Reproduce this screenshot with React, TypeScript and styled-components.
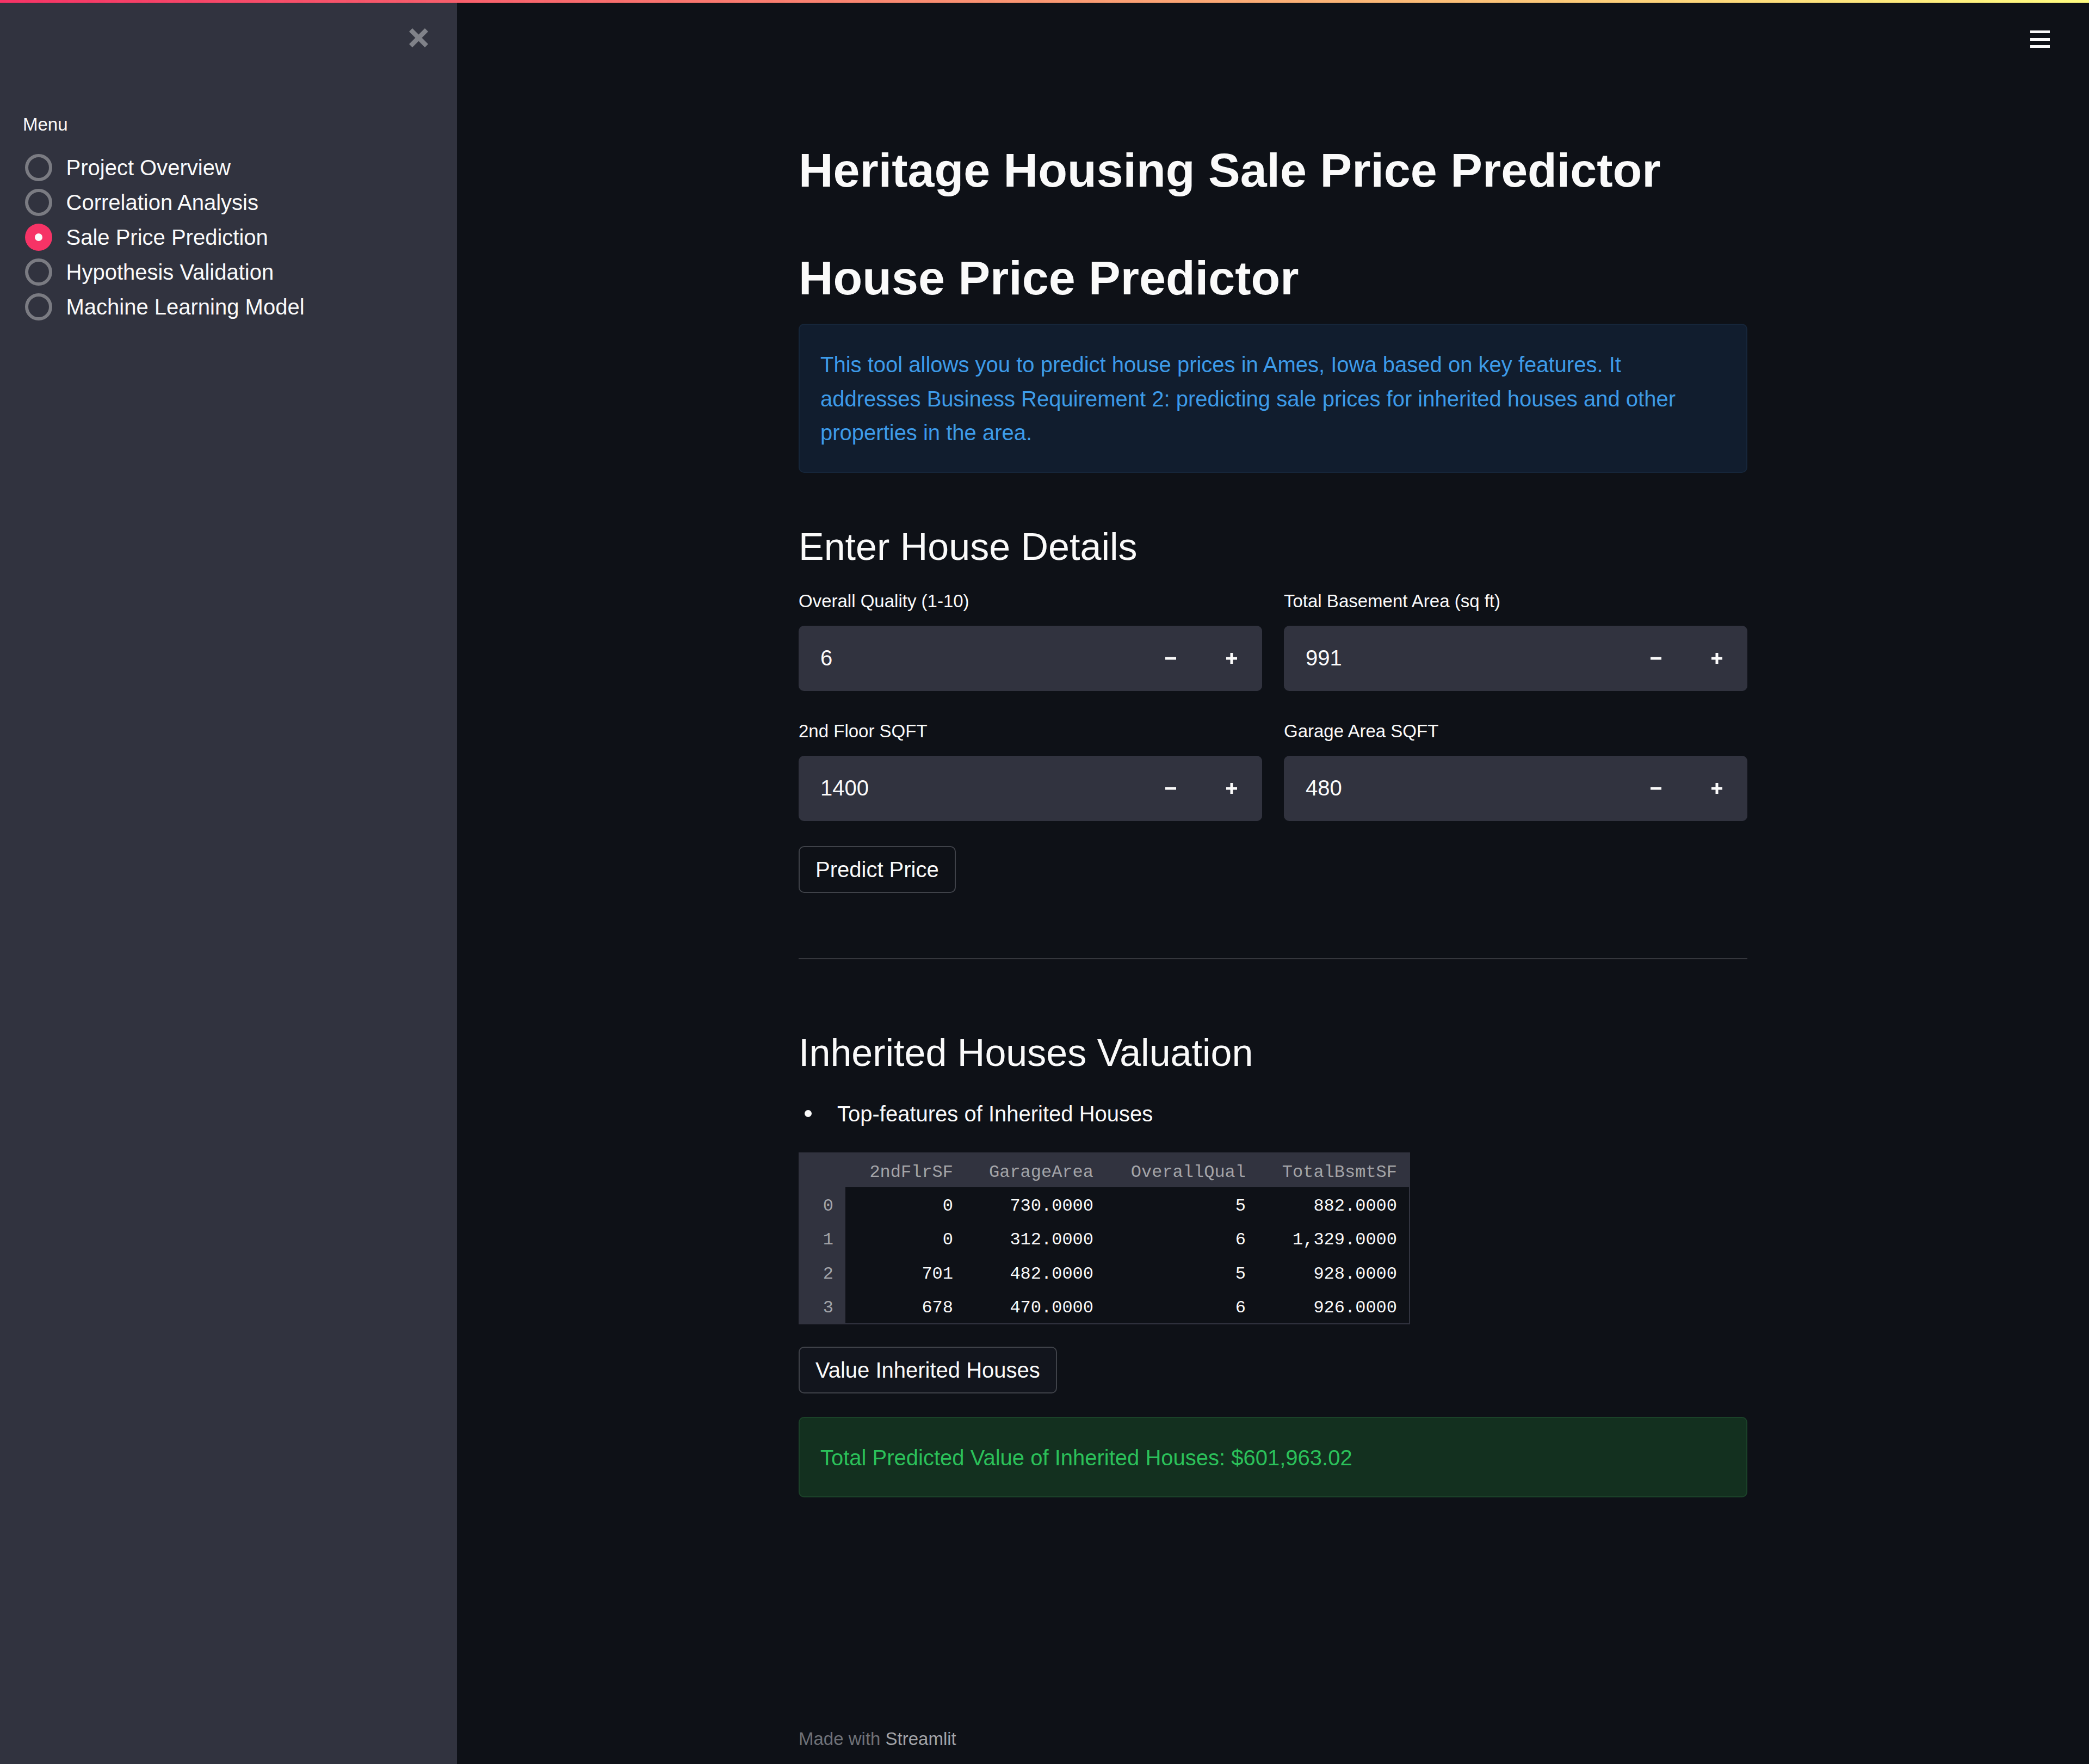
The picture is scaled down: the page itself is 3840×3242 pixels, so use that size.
import styled, { createGlobalStyle } from 'styled-components'

// ==================== colours ====================

const BG = '#0e1117'
const SECONDARY = '#31333f'
const TEXT = '#fafafa'
const PRIMARY = '#f63366'

const GlobalStyle = createGlobalStyle`
  html, body {
    margin: 0;
    padding: 0;
    background: ${BG};
  }
  body {
    font-family: "Liberation Sans", Arial, sans-serif;
    color: ${TEXT};
  }
  * { box-sizing: border-box; }
`

// ==================== frame ====================

const Page = styled.div`
  display: flex;
  min-height: 100vh;
  background: ${BG};
`

const Decoration = styled.div`
  position: fixed;
  top: 0;
  left: 0;
  right: 0;
  height: 5px;
  background: linear-gradient(90deg, ${PRIMARY}, #fffd80);
  z-index: 10;
`

// ==================== sidebar ====================

const Sidebar = styled.aside`
  width: 840px;
  flex-shrink: 0;
  background: ${SECONDARY};
  padding: 52px 53px 0 42px;
  display: flex;
  flex-direction: column;
`

const CloseRow = styled.div`
  display: flex;
  justify-content: flex-end;
`

const CloseButton = styled.button`
  width: 35px;
  height: 35px;
  padding: 0;
  border: 0;
  background: none;
  color: #808289;
  display: flex;
  cursor: pointer;
`

const MenuLabel = styled.div`
  margin-top: 114px;
  font-size: 33px;
  line-height: 56px;
`

const RadioGroup = styled.div`
  margin-top: 19px;
  display: flex;
  flex-direction: column;
`

const RadioRow = styled.label`
  height: 64px;
  display: flex;
  align-items: center;
  gap: 26px;
  padding-left: 3.5px;
  font-size: 40px;
  cursor: pointer;
`

const RadioMark = styled.span<{ $checked: boolean }>`
  width: 50px;
  height: 50px;
  flex-shrink: 0;
  border-radius: 50%;
  border: ${p => (p.$checked ? 'none' : '6px solid #7a7b82')};
  background: ${p => (p.$checked ? PRIMARY : 'transparent')};
  display: flex;
  align-items: center;
  justify-content: center;

  &::after {
    content: '';
    display: ${p => (p.$checked ? 'block' : 'none')};
    width: 14px;
    height: 14px;
    border-radius: 50%;
    background: ${TEXT};
  }
`

// ==================== main ====================

const Main = styled.main`
  flex: 1;
  position: relative;
  display: flex;
  flex-direction: column;
  align-items: center;
`

const MenuButton = styled.button`
  position: absolute;
  top: 56px;
  right: 72px;
  width: 36px;
  padding: 0;
  border: 0;
  background: none;
  display: flex;
  flex-direction: column;
  gap: 8.5px;
  cursor: pointer;
`

const MenuBar = styled.span`
  display: block;
  height: 5px;
  background: ${TEXT};
`

const Block = styled.div`
  width: 1744px;
  flex: 1;
  display: flex;
  flex-direction: column;
  padding-top: 260px;
`

const Title = styled.h1<{ $gap?: number }>`
  margin: ${p => p.$gap ?? 0}px 0 0;
  font-size: 88px;
  font-weight: 700;
  line-height: 1.2;
`

const Subheader = styled.h3<{ $gap: number }>`
  margin: ${p => p.$gap}px 0 0;
  font-size: 70px;
  font-weight: 400;
  line-height: 84px;
`

const Alert = styled.div<{ $kind: 'info' | 'success'; $gap: number }>`
  margin-top: ${p => p.$gap}px;
  border-radius: 10px;
  border: 2px solid ${p => (p.$kind === 'info' ? '#16263a' : '#1b4229')};
  background: ${p => (p.$kind === 'info' ? '#111d2e' : '#13301f')};
  color: ${p => (p.$kind === 'info' ? '#3d9be9' : '#2bc15a')};
  padding: 42px 38px 40px;
  font-size: 40px;
  line-height: 62.5px;
`

const FieldGrid = styled.div`
  margin-top: 30px;
  display: grid;
  grid-template-columns: 1fr 1fr;
  column-gap: 40px;
  row-gap: 46px;
`

const Field = styled.div`
  display: flex;
  flex-direction: column;
`

const FieldLabel = styled.label`
  font-size: 33px;
  line-height: 56px;
`

const NumberShell = styled.div`
  margin-top: 17px;
  height: 120px;
  display: flex;
  border-radius: 10px;
  overflow: hidden;
  background: ${SECONDARY};
`

const NumberValue = styled.input`
  flex: 1;
  min-width: 0;
  height: 100%;
  padding: 0 0 0 40px;
  border: 0;
  outline: none;
  background: transparent;
  color: ${TEXT};
  font-family: inherit;
  font-size: 40px;
`

const StepButton = styled.button`
  width: 112px;
  height: 100%;
  padding: 0;
  border: 0;
  background: ${SECONDARY};
  color: ${TEXT};
  display: flex;
  align-items: center;
  justify-content: center;
  cursor: pointer;
`

const Button = styled.button<{ $gap: number; $raised?: boolean }>`
  margin-top: ${p => p.$gap}px;
  align-self: flex-start;
  padding: 9px 29px;
  border: 2px solid #3f4249;
  border-radius: 10px;
  background: ${p => (p.$raised ? '#12151d' : 'transparent')};
  color: ${TEXT};
  font-family: inherit;
  font-size: 40px;
  line-height: 64px;
  cursor: pointer;
`

const Divider = styled.div`
  margin-top: 120px;
  height: 2px;
  background: #35373d;
`

const BulletList = styled.ul`
  margin: 39px 0 0;
  padding: 0;
  list-style: none;
`

const BulletItem = styled.li`
  display: flex;
  align-items: center;
  font-size: 40px;
  line-height: 62.5px;

  &::before {
    content: '';
    width: 13px;
    height: 13px;
    border-radius: 50%;
    background: ${TEXT};
    margin: 0 47px 0 11px;
  }
`

const DataTable = styled.table`
  margin-top: 39.5px;
  align-self: flex-start;
  width: 1124px;
  table-layout: fixed;
  border-collapse: separate;
  border-spacing: 0;
  border: 2px solid ${SECONDARY};
  font-family: "Liberation Mono", "DejaVu Sans Mono", monospace;
  font-size: 32px;
`

const Col = styled.col<{ $width: number }>`
  width: ${p => p.$width}px;
`

const HeadCell = styled.th`
  height: 62px;
  padding: 7px 22px 0 0;
  text-align: right;
  font-weight: 400;
  color: #a3a4a8;
  background: ${SECONDARY};
  white-space: nowrap;
`

const IndexCell = styled.th`
  height: 62.5px;
  padding: 7px 22px 0 0;
  text-align: right;
  font-weight: 400;
  color: #a3a4a8;
  background: ${SECONDARY};
`

const Cell = styled.td`
  height: 62.5px;
  padding: 7px 22px 0 0;
  text-align: right;
  color: ${TEXT};
  white-space: nowrap;
`

const Footer = styled.footer`
  margin-top: auto;
  padding-bottom: 18px;
  font-size: 33px;
  line-height: 56px;
  color: #6f7177;

  strong {
    font-weight: 400;
    color: #a2a4a8;
  }
`

// ==================== data ====================

const pages = [
  'Project Overview',
  'Correlation Analysis',
  'Sale Price Prediction',
  'Hypothesis Validation',
  'Machine Learning Model',
]

const fields = [
  { label: 'Overall Quality (1-10)', value: '6' },
  { label: 'Total Basement Area (sq ft)', value: '991' },
  { label: '2nd Floor SQFT', value: '1400' },
  { label: 'Garage Area SQFT', value: '480' },
]

const columns = ['2ndFlrSF', 'GarageArea', 'OverallQual', 'TotalBsmtSF']

const rows = [
  ['0', '730.0000', '5', '882.0000'],
  ['0', '312.0000', '6', '1,329.0000'],
  ['701', '482.0000', '5', '928.0000'],
  ['678', '470.0000', '6', '926.0000'],
]

// ==================== icons ====================

const CloseIcon = () => (
  <svg width="35" height="35" viewBox="0 0 35 35">
    <path d="M3 3 L32 32 M32 3 L3 32" stroke="currentColor" strokeWidth="8.5" strokeLinecap="butt" />
  </svg>
)

const MinusIcon = () => (
  <svg width="20" height="20" viewBox="0 0 20 20">
    <rect x="0" y="7.5" width="20" height="5" fill="currentColor" />
  </svg>
)

const PlusIcon = () => (
  <svg width="20" height="20" viewBox="0 0 20 20">
    <rect x="0" y="7.5" width="20" height="5" fill="currentColor" />
    <rect x="7.5" y="0" width="5" height="20" fill="currentColor" />
  </svg>
)

// ==================== page ====================

export default function App() {
  const selected = 'Sale Price Prediction'

  return (
    <>
      <GlobalStyle />
      <Decoration />
      <Page>
        <Sidebar>
          <CloseRow>
            <CloseButton aria-label="Close sidebar">
              <CloseIcon />
            </CloseButton>
          </CloseRow>
          <MenuLabel>Menu</MenuLabel>
          <RadioGroup>
            {pages.map(name => (
              <RadioRow key={name}>
                <RadioMark $checked={name === selected} />
                {name}
              </RadioRow>
            ))}
          </RadioGroup>
        </Sidebar>

        <Main>
          <MenuButton aria-label="Menu">
            <MenuBar />
            <MenuBar />
            <MenuBar />
          </MenuButton>

          <Block>
            <Title>Heritage Housing Sale Price Predictor</Title>
            <Title $gap={92}>House Price Predictor</Title>

            <Alert $kind="info" $gap={32}>
              This tool allows you to predict house prices in Ames, Iowa based on key features. It
              addresses Business Requirement 2: predicting sale prices for inherited houses and other
              properties in the area.
            </Alert>

            <Subheader $gap={94}>Enter House Details</Subheader>
            <FieldGrid>
              {fields.map(f => (
                <Field key={f.label}>
                  <FieldLabel>{f.label}</FieldLabel>
                  <NumberShell>
                    <NumberValue type="text" readOnly value={f.value} />
                    <StepButton aria-label="Decrement">
                      <MinusIcon />
                    </StepButton>
                    <StepButton aria-label="Increment">
                      <PlusIcon />
                    </StepButton>
                  </NumberShell>
                </Field>
              ))}
            </FieldGrid>

            <Button $gap={46}>Predict Price</Button>

            <Divider />

            <Subheader $gap={130}>Inherited Houses Valuation</Subheader>
            <BulletList>
              <BulletItem>Top-features of Inherited Houses</BulletItem>
            </BulletList>

            <DataTable>
              <colgroup>
                <Col $width={84} />
                <Col $width={220} />
                <Col $width={258} />
                <Col $width={280} />
                <Col $width={278} />
              </colgroup>
              <thead>
                <tr>
                  <HeadCell />
                  {columns.map(c => (
                    <HeadCell key={c}>{c}</HeadCell>
                  ))}
                </tr>
              </thead>
              <tbody>
                {rows.map((r, i) => (
                  <tr key={i}>
                    <IndexCell>{i}</IndexCell>
                    {r.map((v, j) => (
                      <Cell key={j}>{v}</Cell>
                    ))}
                  </tr>
                ))}
              </tbody>
            </DataTable>

            <Button $gap={41} $raised>Value Inherited Houses</Button>

            <Alert $kind="success" $gap={43}>
              Total Predicted Value of Inherited Houses: $601,963.02
            </Alert>

            <Footer>
              Made with <strong>Streamlit</strong>
            </Footer>
          </Block>
        </Main>
      </Page>
    </>
  )
}
